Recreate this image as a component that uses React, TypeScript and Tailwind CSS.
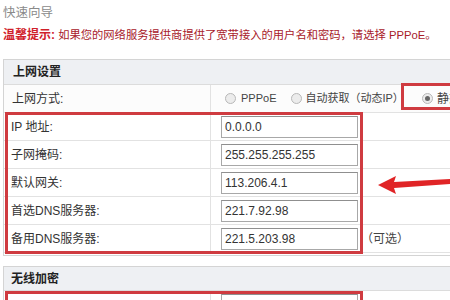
const Radio = ({ checked = false }: { checked?: boolean }) => (
  <span className="w-[11px] h-[11px] rounded-full border border-[#b8b8b8] bg-[#ececec] flex items-center justify-center shrink-0">
    {checked && <span className="w-[5px] h-[5px] rounded-full bg-[#666]" />}
  </span>
);

const Field = ({ value }: { value: string }) => (
  <div className="w-[137px] h-[22px] border border-[#a8a8a8] border-t-[#8f8f8f] bg-white pl-[3px] flex items-center text-[12px] text-[#333]">
    {value}
  </div>
);

const rows = [
  { label: 'IP 地址:', value: '0.0.0.0' },
  { label: '子网掩码:', value: '255.255.255.255' },
  { label: '默认网关:', value: '113.206.4.1' },
  { label: '首选DNS服务器:', value: '221.7.92.98' },
  { label: '备用DNS服务器:', value: '221.5.203.98', note: '（可选）' },
];

const App = () => {
  return (
    <div
      className="relative w-[450px] h-[300px] overflow-hidden bg-white text-[#333]"
      style={{ fontFamily: '"Liberation Sans", "Noto Sans CJK SC", sans-serif' }}
    >
      <div className="pl-[3px] pt-[5px] text-[12.5px] leading-[16px] text-[#8a8a8a]">快速向导</div>
      <div className="pl-[3px] mt-[7px] text-[11.3px] leading-[14px] text-[#a8202a] whitespace-nowrap">
        <span className="text-[12px] font-bold text-[#d0202a]">温馨提示:</span> 如果您的网络服务提供商提供了宽带接入的用户名和密码，请选择 PPPoE。
      </div>

      <div className="ml-[3px] mt-[17px] w-[480px] border border-[#d4d4d4]">
        <div className="h-[25px] bg-[#eef0f3] border-b border-[#dcdcdc] pl-[9px] flex items-center text-[12px] font-bold text-[#222]">
          上网设置
        </div>
        <div className="h-[28px] flex border-b border-[#e2e2e2] bg-[#fcfcfc]">
          <div className="w-[207px] border-r border-[#e2e2e2] pl-[8px] flex items-center text-[12px]">上网方式:</div>
          <div className="flex-1 flex items-center pl-[14px] text-[11px] text-[#444] whitespace-nowrap">
            <Radio />
            <span className="ml-[5px]">PPPoE</span>
            <span className="ml-[15px]"><Radio /></span>
            <span className="ml-[3px]">自动获取（动态IP）</span>
            <span className="ml-[18px]"><Radio checked /></span>
            <span className="ml-[4px] text-[12px]">静态IP</span>
          </div>
        </div>
        {rows.map((r) => (
          <div key={r.label} className="h-[28px] flex border-b border-[#e2e2e2]">
            <div className="w-[207px] border-r border-[#e2e2e2] pl-[7px] flex items-center text-[12px]">{r.label}</div>
            <div className="flex-1 flex items-center pl-[10px]">
              <Field value={r.value} />
              {r.note && <span className="ml-[3px] text-[12px] text-[#444]">{r.note}</span>}
            </div>
          </div>
        ))}
        <div className="h-[2px]" />
      </div>

      <div className="ml-[3px] mt-[10px] w-[480px] border border-[#d4d4d4]">
        <div className="h-[24px] bg-[#eef0f3] border-b border-[#dcdcdc] pl-[7px] flex items-center text-[12px] font-bold text-[#222]">
          无线加密
        </div>
        <div className="h-[28px] flex border-b border-[#e2e2e2]">
          <div className="w-[207px] border-r border-[#e2e2e2]" />
          <div className="flex-1 flex items-center pl-[10px]">
            <Field value="" />
          </div>
        </div>
      </div>

      {/* annotations */}
      <div className="absolute left-[5px] top-[112px] w-[358px] h-[142px] border-[3px] border-[#cf3b40]" />
      <div className="absolute left-[401px] top-[83px] w-[70px] h-[27px] border-[3px] border-[#cf3b40]" />
      <div className="absolute left-[5px] top-[291px] w-[358px] h-[40px] border-[3px] border-[#cf3b40]" />
      <svg className="absolute left-[374px] top-[172px]" width="76" height="26" viewBox="0 0 76 26">
        <path d="M4 13 L22 4 L20 10 L76 7 L76 12 L20 16 L22 22 Z" fill="#e02426" />
      </svg>
    </div>
  );
};

export default App;
